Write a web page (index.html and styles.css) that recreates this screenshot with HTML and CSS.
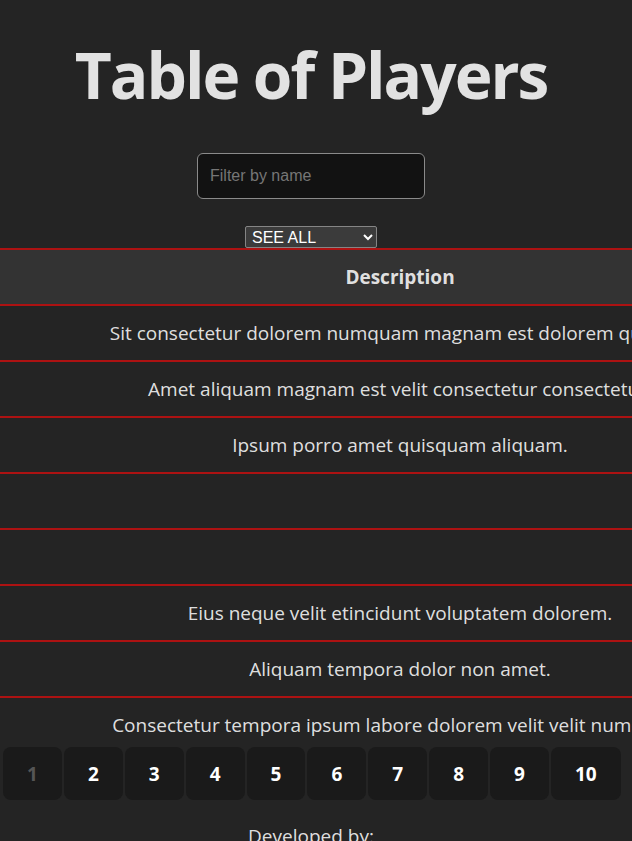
FILE: index.html
```html
<!DOCTYPE html>
<html lang="en">
<head>
<meta charset="utf-8">
<title>Table of Players</title>
<link rel="stylesheet" href="styles.css">
</head>
<body>
<div class="app">
  <header class="top">
    <h1 class="title">Table of Players</h1>
    <input class="filter" type="text" placeholder="Filter by name">
    <select class="choice">
      <option>SEE ALL</option>
      <option>10</option>
      <option>20</option>
    </select>
  </header>

  <div class="table-wrap">
    <table class="players">
      <thead>
        <tr><th>Description</th></tr>
      </thead>
      <tbody>
        <tr><td>Sit consectetur dolorem numquam magnam est dolorem quiquia.</td></tr>
        <tr><td>Amet aliquam magnam est velit consectetur consectetur.</td></tr>
        <tr><td>Ipsum porro amet quisquam aliquam.</td></tr>
        <tr><td></td></tr>
        <tr><td></td></tr>
        <tr><td>Eius neque velit etincidunt voluptatem dolorem.</td></tr>
        <tr><td>Aliquam tempora dolor non amet.</td></tr>
        <tr><td>Consectetur tempora ipsum labore dolorem velit velit numquam.</td></tr>
      </tbody>
    </table>
  </div>

  <nav class="pager">
    <button class="page current" disabled>1</button>
    <button class="page">2</button>
    <button class="page">3</button>
    <button class="page">4</button>
    <button class="page">5</button>
    <button class="page">6</button>
    <button class="page">7</button>
    <button class="page">8</button>
    <button class="page">9</button>
    <button class="page">10</button>
  </nav>

  <footer class="footer">
    <p class="credit">Developed by:</p>
  </footer>
</div>
</body>
</html>
```

FILE: styles.css
```css
:root {
  color-scheme: dark;
  scrollbar-width: none;
}

html, body {
  margin: 0;
  padding: 0;
  background: #242424;
  overflow-x: hidden;
}

body {
  font-family: "Open Sans", "Noto Sans", sans-serif;
  color: rgba(255, 255, 255, 0.87);
  font-size: 16px;
}

.app {
  width: 622px;
}

.top {
  display: flex;
  flex-direction: column;
  align-items: center;
}

.title {
  margin: 40px 0 0;
  font-size: 64px;
  line-height: 1.1;
  font-weight: 700;
  letter-spacing: -2px;
  color: rgba(255, 255, 255, 0.87);
}

.filter {
  margin-top: 43px;
  box-sizing: border-box;
  width: 228px;
  height: 46px;
  padding: 0 12px;
  font-family: "Liberation Sans", Arial, sans-serif;
  font-size: 16px;
  color: #ddd;
  background: #121212;
  border: 1px solid #8a8a8a;
  border-radius: 6px;
  outline: none;
}

.filter::placeholder {
  color: #767676;
}

.choice {
  margin-top: 27px;
  box-sizing: border-box;
  width: 132px;
  height: 22px;
  font-family: "Liberation Sans", Arial, sans-serif;
  font-size: 16px;
  color: #fff;
  background-color: #3b3b3b;
  border: 1px solid #858585;
  border-radius: 2px;
  padding: 0 2px;
}

.table-wrap {
  width: 632px;
  height: 498px;
  overflow: hidden;
}

.players {
  width: 800px;
  border-collapse: collapse;
}

.players tr {
  border-top: 2px solid #ad1212;
}

.players th,
.players td {
  height: 54px;
  padding: 0;
  text-align: center;
  white-space: nowrap;
  font-size: 19px;
}

.players th {
  background: #333333;
  font-weight: 700;
  color: rgba(255, 255, 255, 0.87);
}

.players td {
  font-weight: 400;
}

.pager {
  display: flex;
  gap: 2px;
  padding-left: 3px;
  margin-top: 1px;
}

.page {
  box-sizing: border-box;
  height: 53px;
  padding: 0 23px;
  font-family: "Open Sans", "Noto Sans", sans-serif;
  font-size: 19px;
  font-weight: 700;
  color: #fff;
  background: #1a1a1a;
  border: 1px solid transparent;
  border-radius: 8px;
}

.page.current {
  color: #555;
}

.footer {
  text-align: center;
}

.credit {
  margin: 22px 0 0;
  font-size: 19px;
  line-height: 1.5;
}
```
